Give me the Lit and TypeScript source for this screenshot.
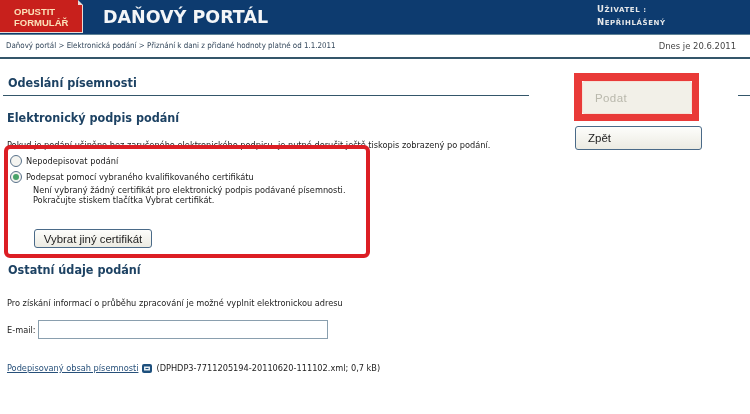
import { LitElement, html, css } from "lit";
import { customElement } from "lit/decorators.js";

@customElement("app-root")
export class AppRoot extends LitElement {
  static styles = css`
    :host { display: block; width: 750px; height: 414px; overflow: hidden; background: #fff; position: relative;
      font-family: "DejaVu Sans Condensed", "DejaVu Sans", sans-serif; font-size: 9.150px; color: #222; filter: blur(0.35px); }
    * { box-sizing: border-box; }
    .top { height: 35px; background: #0d3b6f; border-bottom: 1px solid #5f8296; display: flex; }
    .exit { width: 83px; height: 33px; background: #c8201c; border-right: 1px solid #e8dcd8; border-bottom: 1px solid #e8dcd8; color: #fbe0b8;
      font: bold 9.500px/11px "Liberation Sans", sans-serif; padding: 6px 0 0 14px; position: relative; }
    .exit::after { content: ""; position: absolute; right: -1px; top: 0; border-top: 5px solid #0d3b6f; border-left: 5px solid #e8dcd8; }
    .logo { margin-left: 20px; color: #f4f6f8; font: bold 17.500px/34px "DejaVu Sans", sans-serif; width: 494px; }
    .user { color: #e6e8ea; font: bold 7px/11.500px "DejaVu Sans", sans-serif; padding-top: 4px; letter-spacing: .6px; }
    .user span { font-size: 8.500px; }
    .crumb { height: 24px; border-bottom: 2px solid #34566a; display: flex; justify-content: space-between; align-items: center; padding: 0 14px 2px 6px; font-size: 7.900px; color: #33475b; }
    .crumb b { font-weight: normal; font-size: 9.400px; color: #444; }
    .page { display: grid; grid-template-columns: 529px 46px 127px 36px 12px; }
    .main { padding-left: 3px; }
    h1, h2 { margin: 0; font: bold 12.500px/16px "DejaVu Sans Condensed", "DejaVu Sans", sans-serif; color: #1d4263; }
    h1 { height: 37px; padding: 16px 0 0 5px; border-bottom: 1px solid #34566a; }
    .rule { height: 37px; border-bottom: 1px solid #34566a; }
    h2 { padding-left: 4px; }
    .sec1 { margin-top: 14px; }
    .sec2 { margin-top: 14px; padding-left: 5px; }
    .note { margin: 13px 0 0 4px; line-height: 12px; white-space: nowrap; height: 12px; }
    .opts { margin: 3px 0 0 7px; }
    .opt { display: flex; align-items: center; gap: 4px; height: 13px; }
    .opt + .opt { margin-top: 3px; }
    .radio { width: 12px; height: 12px; border-radius: 50%; border: 1px solid #58718a; background: #f4f4f0; display: flex; align-items: center; justify-content: center; }
    .radio i { width: 6px; height: 6px; border-radius: 50%; background: #4aa36a; }
    .detail { margin: 2px 0 0 23px; line-height: 10px; }
    .pick { margin: 24px 0 0 24px; width: 118px; height: 19px; border: 1px solid #4a6a88; border-radius: 3px; background: linear-gradient(#fdfdfb, #ecebe2);
      font: 11.400px "Liberation Sans", sans-serif; color: #222; padding: 0; display: block; }
    .info { margin: 19px 0 0 4px; line-height: 12px; }
    .mail { margin: 11px 0 0 4px; display: flex; align-items: center; gap: 3px; }
    .mail label { width: 28px; white-space: nowrap; }
    .mail input { width: 290px; height: 19px; border: 1px solid #8a9fae; background: #fff; padding: 0; }
    .file { margin: 23px 0 0 4px; display: flex; align-items: center; gap: 4px; line-height: 12px; }
    .file a { color: #27507a; text-decoration: underline; }
    .side { padding-top: 22px; display: flex; flex-direction: column; align-items: flex-start; }
    .side button { border-radius: 3px; font: 11.500px "Liberation Sans", sans-serif; text-align: left; }
    .submit { height: 33px; width: 110px; border: 1px solid #f5e2d8; background: #f2f0e8; color: #b9b8ac; padding: 0 0 0 12px; margin-left: 7px; letter-spacing: .4px; }
    .back { height: 24px; width: 127px; margin-top: 12px; border: 1px solid #4a6a88; background: linear-gradient(#fdfdfb, #ecebe2); color: #222; padding: 0 0 0 12px; }
    .mark { position: absolute; pointer-events: none; }
    .m1 { left: 4px; top: 145px; width: 366px; height: 113px; border: 4px solid #dc1e24; border-radius: 6px; }
    .m2 { left: 574px; top: 73px; width: 125px; height: 48px; border: solid #e93a38; border-width: 8px 7px 7px 8px; }
  `;
  render() {
    return html`
      <div class="top">
        <div class="exit">OPUSTIT<br />FORMULÁŘ</div>
        <div class="logo">DAŇOVÝ PORTÁL</div>
        <div class="user"><span>U</span>ŽIVATEL :<br /><span>N</span>EPŘIHLÁŠENÝ</div>
      </div>
      <div class="crumb">
        <span>Daňový portál &gt; Elektronická podání &gt; Přiznání k dani z přidané hodnoty platné od 1.1.2011</span>
        <b>Dnes je 20.6.2011</b>
      </div>
      <div class="page">
        <div class="main">
          <h1>Odeslání písemnosti</h1>
          <h2 class="sec1">Elektronický podpis podání</h2>
          <div class="note">Pokud je podání učiněno bez zaručeného elektronického podpisu, je nutné doručit ještě tiskopis zobrazený po podání.</div>
          <div class="opts">
            <label class="opt"><span class="radio"></span>Nepodepisovat podání</label>
            <label class="opt"><span class="radio"><i></i></span>Podepsat pomocí vybraného kvalifikovaného certifikátu</label>
            <div class="detail">Není vybraný žádný certifikát pro elektronický podpis podávané písemnosti.<br />Pokračujte stiskem tlačítka Vybrat certifikát.</div>
            <button class="pick">Vybrat jiný certifikát</button>
          </div>
          <h2 class="sec2">Ostatní údaje podání</h2>
          <div class="info">Pro získání informací o průběhu zpracování je možné vyplnit elektronickou adresu</div>
          <div class="mail"><label>E-mail:</label><input type="text" /></div>
          <div class="file"><a href="#">Podepisovaný obsah písemnosti</a>
            <svg width="10" height="9" viewBox="0 0 10 9"><rect x="0" y="0" width="10" height="9" rx="2" fill="#1d4f7c"/><path d="M2 2.500h6v4H2z" fill="#e4ecf2"/><path d="M3.500 4.500h3" stroke="#1d4f7c"/></svg>
            <span>(DPHDP3-7711205194-20110620-111102.xml; 0,7 kB)</span></div>
        </div>
        <div></div>
        <div class="side">
          <button class="submit" disabled>Podat</button>
          <button class="back">Zpět</button>
        </div>
        <div></div>
        <div class="rule"></div>
      </div>
      <div class="mark m1"></div>
      <div class="mark m2"></div>
    `;
  }
}
